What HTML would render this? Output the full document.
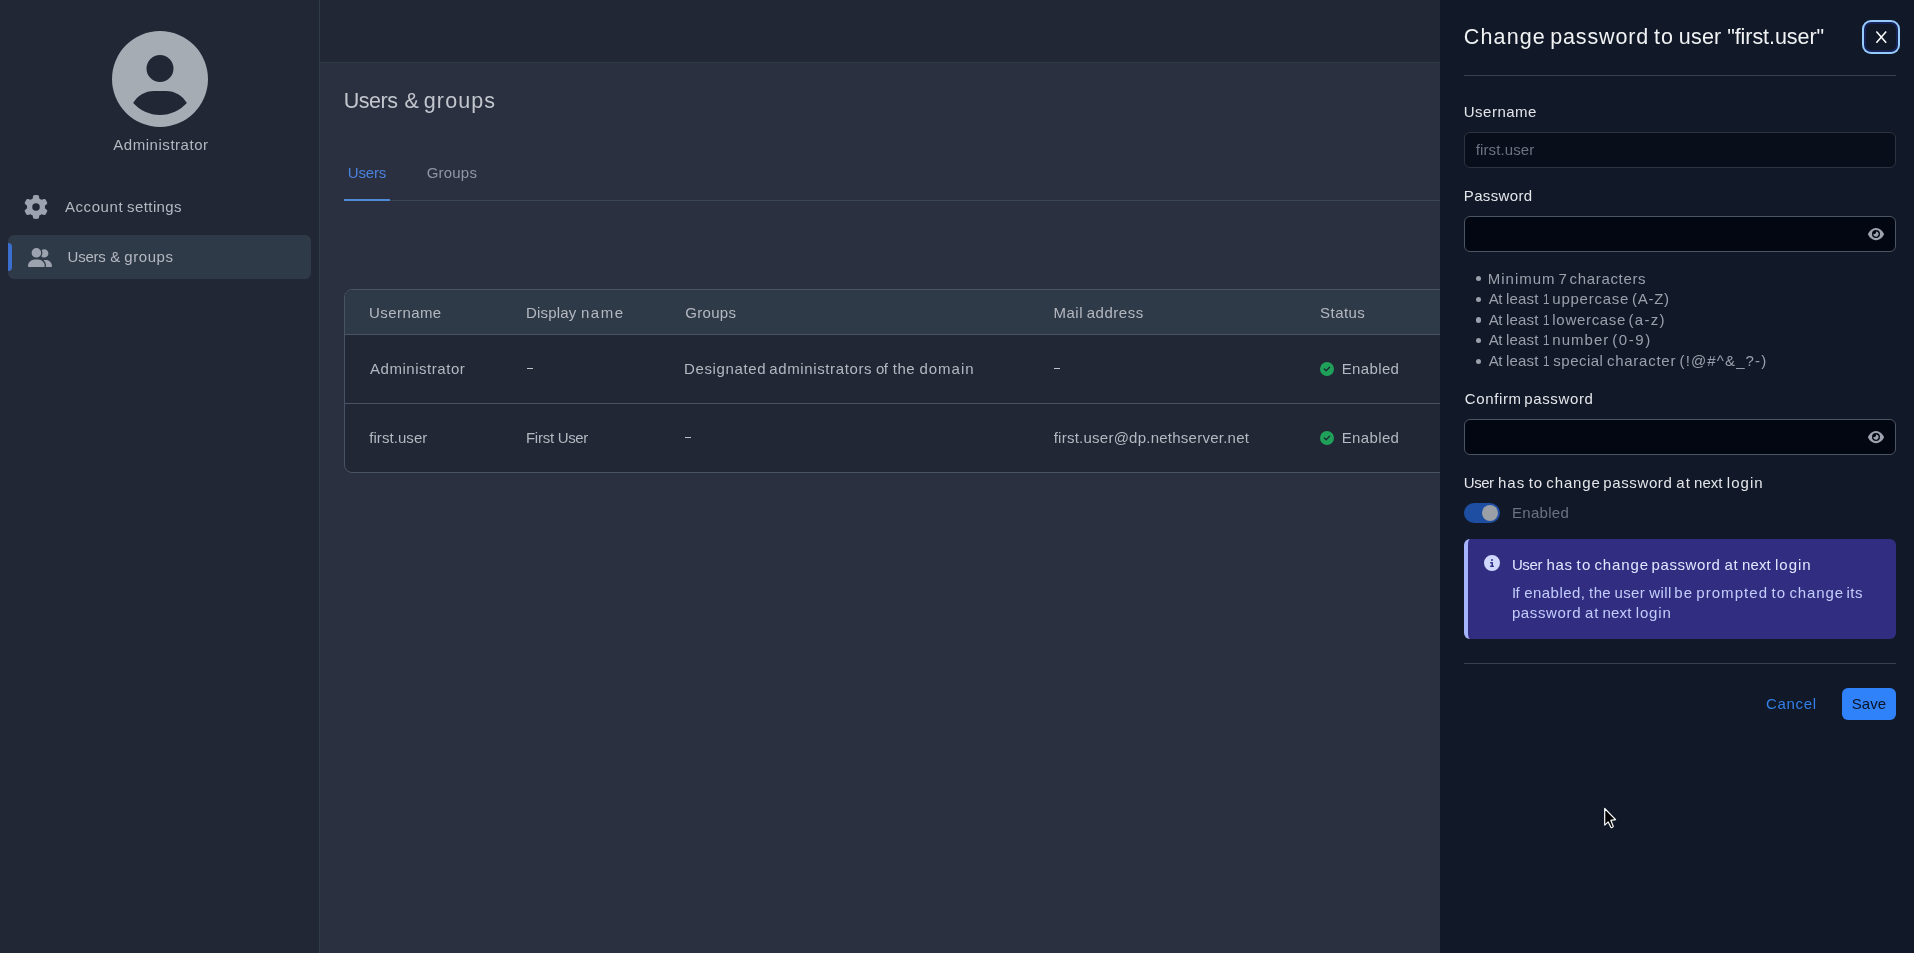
<!DOCTYPE html>
<html lang="en">
<head>
<meta charset="utf-8">
<title>Users &amp; groups</title>
<style>
*{box-sizing:border-box;margin:0;padding:0}
html,body{width:1914px;height:953px;overflow:hidden}
body{position:relative;background:#2a3040;font-family:"Liberation Sans",sans-serif;font-size:15px;}
.abs,.t,svg.ic{position:absolute}
.t{white-space:pre;line-height:20px}
#texts{left:0;top:0;width:1914px;height:953px;will-change:transform}
/* dimmed page */
#sidebar{left:0;top:0;width:320px;height:953px;background:#212735;border-right:1px solid #2f3a49}
#topbar{left:320px;top:0;width:1120px;height:63px;background:#212735;border-bottom:1px solid #2f3a49}
#navactive{left:8px;top:235px;width:303px;height:44px;border-radius:6px;background:#2f3a49}
#navbar{left:8px;top:243px;width:4px;height:28px;background:#3a6fd0;border-radius:0 4px 4px 0}
#tabline{left:344px;top:200px;width:1096px;height:1px;background:#3a4556}
#tabactive{left:344px;top:199px;width:46px;height:2px;background:#4f8ad8}
#table{left:344px;top:289px;width:1200px;height:184px;border:1px solid #485365;border-radius:8px;background:#212735;overflow:hidden}
#thead{left:0;top:0;width:100%;height:44px;background:#2f3a49}
.rowline{left:0;width:100%;height:1px;background:#485365}
/* drawer */
#drawer{left:1440px;top:0;width:474px;height:953px;background:#111827}
.hr{left:1464px;width:432px;height:1px;background:#374151}
.inp{left:1464px;width:432px;height:36px;border:1px solid #4b5563;border-radius:6px;background:#030712}
.inp.dis{background:#090e1b;border-color:#2b3443}
.dot{left:1475.7px;width:5.2px;height:5.2px;border-radius:50%;background:#9aa1ad}
#closering{left:1862px;top:20px;width:38px;height:34px;border-radius:9px;background:#95cbfd}
#closeoff{left:1864px;top:22px;width:34px;height:30px;border-radius:7px;background:#17215a}
#closebtn{left:1866px;top:24px;width:30px;height:26px;border-radius:5px;background:#111827}
#toggle{left:1464px;top:503px;width:36px;height:20px;border-radius:10px;background:#1d4ea1}
#knob{left:1482px;top:505px;width:16px;height:16px;border-radius:50%;background:#9b9fa6}
#alert{left:1464px;top:539px;width:432px;height:100px;border-radius:6px;background:#312e81;border-left:4px solid #a5b4fc}
#save{left:1842px;top:688px;width:54px;height:32px;border-radius:6px;background:#3082fb}
</style>
</head>
<body>
<!-- page (dimmed by backdrop) -->
<div class="abs" id="topbar"></div>
<div class="abs" id="sidebar"></div>

<svg class="ic" style="left:112px;top:31px" width="96" height="96" viewBox="0 0 512 512"><path fill="#a5acb4" d="M399 384.2C376.9 345.8 335.4 320 288 320H224c-47.4 0-88.9 25.8-111 64.2c35.2 39.2 86.2 63.8 143 63.8s107.8-24.7 143-63.8zM0 256a256 256 0 1 1 512 0A256 256 0 1 1 0 256zm256 16a72 72 0 1 0 0-144 72 72 0 1 0 0 144z"/></svg>

<svg class="ic" style="left:24px;top:195px" width="24" height="24" viewBox="0 0 512 512"><path fill="#9da3ae" d="M495.9 166.6c3.2 8.7 .5 18.4-6.4 24.6l-43.3 39.4c1.1 8.3 1.7 16.8 1.7 25.4s-.6 17.1-1.7 25.4l43.3 39.4c6.9 6.2 9.6 15.9 6.4 24.6c-4.400 11.900-9.700 23.300-15.800 34.300l-4.700 8.100c-6.600 11-14 21.400-22.100 31.200c-5.900 7.200-15.700 9.600-24.500 6.800l-55.700-17.700c-13.400 10.300-28.200 18.900-44 25.400l-12.500 57.100c-2 9.100-9 16.300-18.200 17.800c-13.800 2.300-28 3.500-42.500 3.500s-28.700-1.200-42.500-3.500c-9.200-1.500-16.200-8.700-18.200-17.800l-12.500-57.100c-15.800-6.500-30.600-15.100-44-25.400L83.100 425.900c-8.800 2.800-18.600 .3-24.500-6.800c-8.100-9.800-15.500-20.200-22.100-31.200l-4.700-8.100c-6.100-11-11.400-22.400-15.800-34.300c-3.200-8.700-.5-18.400 6.400-24.600l43.300-39.400C64.600 273.100 64 264.600 64 256s.6-17.100 1.700-25.400L22.400 191.200c-6.900-6.200-9.600-15.900-6.400-24.600c4.400-11.900 9.700-23.300 15.800-34.300l4.700-8.100c6.600-11 14-21.400 22.100-31.200c5.900-7.200 15.700-9.600 24.500-6.800l55.700 17.700c13.400-10.300 28.200-18.900 44-25.400l12.500-57.100c2-9.100 9-16.300 18.200-17.800C227.300 1.200 241.500 0 256 0s28.700 1.200 42.500 3.500c9.200 1.500 16.200 8.700 18.200 17.800l12.500 57.100c15.800 6.500 30.600 15.100 44 25.400l55.700-17.700c8.800-2.800 18.600-.3 24.500 6.800c8.100 9.800 15.500 20.200 22.100 31.200l4.700 8.100c6.100 11 11.400 22.400 15.800 34.300zM256 336a80 80 0 1 0 0-160 80 80 0 1 0 0 160z"/></svg>

<div class="abs" id="navactive"></div>
<div class="abs" id="navbar"></div>
<svg class="ic" style="left:28px;top:247.800px" width="24" height="19.200" viewBox="0 0 640 512"><path fill="#9da3ae" d="M96 128a128 128 0 1 1 256 0A128 128 0 1 1 96 128zM0 482.3C0 383.8 79.8 304 178.3 304h91.4C368.2 304 448 383.8 448 482.3c0 16.4-13.3 29.7-29.7 29.700H29.700C13.300 512 0 498.700 0 482.300zM609.300 512H471.400c5.400-9.400 8.600-20.300 8.600-32v-8c0-60.700-27.100-115.200-69.800-151.800c2.400-.1 4.700-.2 7.100-.2h61.400C567.800 320 640 392.200 640 481.300c0 17-13.800 30.700-30.700 30.700zM432 256c-31 0-59-12.600-79.300-32.900C372.400 196.500 384 163.600 384 128c0-26.800-6.600-52.100-18.300-74.300C384.300 40.100 407.200 32 432 32c61.900 0 112 50.100 112 112s-50.100 112-112 112z"/></svg>

<div class="abs" id="tabline"></div>
<div class="abs" id="tabactive"></div>

<div class="abs" id="table">
  <div class="abs" id="thead"></div>
  <div class="abs rowline" style="top:44px"></div>
  <div class="abs rowline" style="top:113px"></div>
</div>
<!-- dashes -->
<div class="abs" style="left:526.7px;top:367.800px;width:6.200px;height:1.200px;background:#bfc3ca"></div>
<div class="abs" style="left:1054.200px;top:367.800px;width:6.200px;height:1.200px;background:#bfc3ca"></div>
<div class="abs" style="left:684.900px;top:436.800px;width:6.200px;height:1.200px;background:#bfc3ca"></div>
<!-- status icons -->
<svg class="ic" style="left:1320px;top:362px" width="14" height="14" viewBox="0 0 512 512"><circle cx="256" cy="256" r="200" fill="#1c2a33"/><path fill="#20a15a" d="M256 512A256 256 0 1 0 256 0a256 256 0 1 0 0 512zM369 209L241 337c-9.400 9.400-24.600 9.400-33.900 0l-64-64c-9.400-9.400-9.400-24.600 0-33.900s24.600-9.400 33.900 0l47 47L335 175c9.400-9.400 24.600-9.400 33.900 0s9.400 24.600 0 33.900z"/></svg>
<svg class="ic" style="left:1320px;top:430.600px" width="14" height="14" viewBox="0 0 512 512"><circle cx="256" cy="256" r="200" fill="#1c2a33"/><path fill="#20a15a" d="M256 512A256 256 0 1 0 256 0a256 256 0 1 0 0 512zM369 209L241 337c-9.400 9.400-24.600 9.400-33.900 0l-64-64c-9.400-9.400-9.400-24.600 0-33.900s24.600-9.400 33.900 0l47 47L335 175c9.400-9.400 24.600-9.400 33.900 0s9.400 24.600 0 33.900z"/></svg>

<!-- drawer -->
<div class="abs" id="drawer"></div>
<div class="abs" id="closering"></div>
<div class="abs" id="closeoff"></div>
<div class="abs" id="closebtn"></div>
<svg class="ic" style="left:1874px;top:30px" width="14" height="14" viewBox="0 0 14 14"><path d="M2.400 1.400 L12.200 12.800 M12.200 1.400 L2.400 12.800" stroke="#ffffff" stroke-width="1.500" fill="none"/></svg>
<div class="abs hr" style="top:75px"></div>

<div class="abs inp dis" style="top:132px"></div>
<div class="abs inp" style="top:216px"></div>
<svg class="ic" style="left:1868px;top:226.600px" width="16" height="14.220" viewBox="0 0 576 512"><path fill="#9ca3af" d="M288 32c-80.800 0-145.500 36.800-192.600 80.600C48.600 156 17.300 208 2.500 243.700c-3.300 7.900-3.300 16.700 0 24.600C17.300 304 48.600 356 95.400 399.400C142.500 443.200 207.200 480 288 480s145.500-36.800 192.600-80.600c46.800-43.500 78.100-95.400 93-131.100c3.300-7.900 3.300-16.700 0-24.600c-14.900-35.700-46.200-87.700-93-131.100C433.500 68.800 368.800 32 288 32zM144 256a144 144 0 1 1 288 0 144 144 0 1 1 -288 0zm144-64c0 35.300-28.700 64-64 64c-7.100 0-13.900-1.200-20.300-3.300c-5.500-1.800-11.900 1.600-11.700 7.400c.3 6.900 1.300 13.800 3.200 20.700c13.700 51.200 66.400 81.600 117.600 67.900s81.600-66.400 67.900-117.600c-11.100-41.500-47.800-69.400-88.600-71.100c-5.800-.2-9.200 6.100-7.400 11.700c2.100 6.400 3.300 13.200 3.300 20.300z"/></svg>

<div class="abs dot" style="top:276.300px"></div>
<div class="abs dot" style="top:296.500px"></div>
<div class="abs dot" style="top:317.400px"></div>
<div class="abs dot" style="top:337.700px"></div>
<div class="abs dot" style="top:358.700px"></div>

<div class="abs inp" style="top:419px"></div>
<svg class="ic" style="left:1868px;top:429.600px" width="16" height="14.220" viewBox="0 0 576 512"><path fill="#9ca3af" d="M288 32c-80.800 0-145.500 36.800-192.600 80.600C48.600 156 17.300 208 2.500 243.700c-3.300 7.900-3.300 16.700 0 24.600C17.300 304 48.600 356 95.400 399.400C142.500 443.200 207.200 480 288 480s145.500-36.800 192.600-80.600c46.800-43.500 78.100-95.400 93-131.100c3.300-7.900 3.300-16.700 0-24.600c-14.900-35.700-46.200-87.700-93-131.100C433.500 68.800 368.800 32 288 32zM144 256a144 144 0 1 1 288 0 144 144 0 1 1 -288 0zm144-64c0 35.300-28.700 64-64 64c-7.100 0-13.900-1.200-20.300-3.300c-5.500-1.800-11.900 1.600-11.700 7.400c.3 6.900 1.300 13.800 3.200 20.700c13.700 51.200 66.400 81.600 117.600 67.900s81.600-66.400 67.900-117.600c-11.100-41.500-47.800-69.400-88.600-71.100c-5.800-.2-9.200 6.100-7.400 11.700c2.100 6.400 3.300 13.200 3.300 20.300z"/></svg>

<div class="abs" id="toggle"></div>
<div class="abs" id="knob"></div>

<div class="abs" id="alert"></div>
<svg class="ic" style="left:1484px;top:555px" width="16" height="16" viewBox="0 0 512 512"><path fill="#d0d8fd" d="M256 512A256 256 0 1 0 256 0a256 256 0 1 0 0 512zM216 336h24V272H216c-13.300 0-24-10.700-24-24s10.700-24 24-24h48c13.300 0 24 10.700 24 24v88h8c13.300 0 24 10.700 24 24s-10.700 24-24 24H216c-13.300 0-24-10.700-24-24s10.700-24 24-24zm40-208a32 32 0 1 1 0 64 32 32 0 1 1 0-64z"/></svg>

<div class="abs hr" style="top:663px"></div>
<div class="abs" id="save"></div>

<div class="abs" id="texts">
<div class="t" style="left:113.3px;top:134.97px;font-size:15px;letter-spacing:0.533px;color:#b4b8c0">Administrator</div>
<div class="t" style="left:64.9px;top:197.37px;font-size:15px;color:#b4b8c0"><span style="letter-spacing:0.584px">Account</span><span style="letter-spacing:-0.258px"> </span><span style="letter-spacing:0.4px">settings</span></div>
<div class="t" style="left:67.6px;top:246.87px;font-size:15px;color:#b4b8c0"><span style="letter-spacing:-0.274px">Users</span><span style="letter-spacing:0.631px"> </span><span style="letter-spacing:0px">&amp;</span><span style="letter-spacing:-0.183px"> </span><span style="letter-spacing:0.58px">groups</span></div>
<div class="t" style="left:343.8px;top:91.1px;font-size:21.5px;color:#c3c6cd"><span style="letter-spacing:-0.5px">Users</span><span style="letter-spacing:0.971px"> </span><span style="letter-spacing:0px">&amp;</span><span style="letter-spacing:-0.916px"> </span><span style="letter-spacing:1.1px">groups</span></div>
<div class="t" style="left:347.8px;top:163.47px;font-size:15px;letter-spacing:-0.15px;color:#4b82dc">Users</div>
<div class="t" style="left:426.7px;top:163.47px;font-size:15px;letter-spacing:0.2px;color:#8f96a3">Groups</div>
<div class="t" style="left:369.0px;top:302.67px;font-size:15px;letter-spacing:0.429px;color:#b4b8c0">Username</div>
<div class="t" style="left:525.9px;top:302.67px;font-size:15px;color:#b4b8c0"><span style="letter-spacing:0.217px">Display</span><span style="letter-spacing:0.124px"> </span><span style="letter-spacing:1.567px">name</span></div>
<div class="t" style="left:685.2px;top:302.67px;font-size:15px;letter-spacing:0.32px;color:#b4b8c0">Groups</div>
<div class="t" style="left:1053.6px;top:302.67px;font-size:15px;color:#b4b8c0"><span style="letter-spacing:0.468px">Mail</span><span style="letter-spacing:-0.454px"> </span><span style="letter-spacing:0.533px">address</span></div>
<div class="t" style="left:1320.1px;top:302.67px;font-size:15px;letter-spacing:0.44px;color:#b4b8c0">Status</div>
<div class="t" style="left:370.0px;top:359.37px;font-size:15px;letter-spacing:0.533px;color:#b4b8c0">Administrator</div>
<div class="t" style="left:684.0px;top:359.37px;font-size:15px;color:#b4b8c0"><span style="letter-spacing:0.623px">Designated</span><span style="letter-spacing:-0.984px"> </span><span style="letter-spacing:0.616px">administrators</span><span style="letter-spacing:-0.29px"> </span><span style="letter-spacing:-0.5px">of</span><span style="letter-spacing:1.017px"> </span><span style="letter-spacing:0.502px">the</span><span style="letter-spacing:0.168px"> </span><span style="letter-spacing:1.0px">domain</span></div>
<div class="t" style="left:1341.7px;top:359.37px;font-size:15px;letter-spacing:0.367px;color:#b4b8c0">Enabled</div>
<div class="t" style="left:369.2px;top:427.97px;font-size:15px;letter-spacing:0.067px;color:#b4b8c0">first.user</div>
<div class="t" style="left:525.9px;top:427.97px;font-size:15px;color:#b4b8c0"><span style="letter-spacing:-0.199px">First</span><span style="letter-spacing:-0.444px"> </span><span style="letter-spacing:-0.4px">User</span></div>
<div class="t" style="left:1053.7px;top:427.97px;font-size:15px;letter-spacing:0.244px;color:#b4b8c0">first.user@dp.nethserver.net</div>
<div class="t" style="left:1341.7px;top:427.97px;font-size:15px;letter-spacing:0.367px;color:#b4b8c0">Enabled</div>
<div class="t" style="left:1463.8px;top:27.2px;font-size:21.5px;color:#f1f2f4"><span style="letter-spacing:1.134px">Change</span><span style="letter-spacing:-1.703px"> </span><span style="letter-spacing:0.867px">password</span><span style="letter-spacing:-1.124px"> </span><span style="letter-spacing:1.069px">to</span><span style="letter-spacing:-1.248px"> </span><span style="letter-spacing:0.19px">user</span><span style="letter-spacing:-0.259px"> </span><span style="letter-spacing:-0.064px">&quot;first.user&quot;</span></div>
<div class="t" style="left:1463.8px;top:102.02px;font-size:15px;letter-spacing:0.486px;color:#e4e6ea">Username</div>
<div class="t" style="left:1475.8px;top:140.37px;font-size:15px;letter-spacing:0.111px;color:#6b7280">first.user</div>
<div class="t" style="left:1463.8px;top:186.22px;font-size:15px;letter-spacing:0.343px;color:#e4e6ea">Password</div>
<div class="t" style="left:1487.8px;top:269.07px;font-size:15px;color:#9aa1ad"><span style="letter-spacing:0.984px">Minimum</span><span style="letter-spacing:-1.298px"> </span><span style="letter-spacing:0px">7</span><span style="letter-spacing:-1.311px"> </span><span style="letter-spacing:0.656px">characters</span></div>
<div class="t" style="left:1488.8px;top:289.27px;font-size:15px;color:#9aa1ad"><span style="letter-spacing:-0.5px">At</span><span style="letter-spacing:-0.254px"> </span><span style="letter-spacing:0.226px">least</span><span style="letter-spacing:-0.384px"> </span><span style="display:inline-block;transform:scaleX(0.78);transform-origin:0 50%">1</span><span style="letter-spacing:-2.711px"> </span><span style="letter-spacing:0.75px">uppercase</span><span style="letter-spacing:-1.284px"> </span><span style="letter-spacing:0.725px">(A-Z)</span></div>
<div class="t" style="left:1488.8px;top:310.17px;font-size:15px;color:#9aa1ad"><span style="letter-spacing:-0.5px">At</span><span style="letter-spacing:-0.254px"> </span><span style="letter-spacing:0.226px">least</span><span style="letter-spacing:-0.384px"> </span><span style="display:inline-block;transform:scaleX(0.78);transform-origin:0 50%">1</span><span style="letter-spacing:-2.711px"> </span><span style="letter-spacing:0.688px">lowercase</span><span style="letter-spacing:-1.69px"> </span><span style="letter-spacing:1.275px">(a-z)</span></div>
<div class="t" style="left:1488.8px;top:330.47px;font-size:15px;color:#9aa1ad"><span style="letter-spacing:-0.5px">At</span><span style="letter-spacing:-0.254px"> </span><span style="letter-spacing:0.226px">least</span><span style="letter-spacing:-0.384px"> </span><span style="display:inline-block;transform:scaleX(0.78);transform-origin:0 50%">1</span><span style="letter-spacing:-2.711px"> </span><span style="letter-spacing:1.021px">number</span><span style="letter-spacing:-1.351px"> </span><span style="letter-spacing:1.575px">(0-9)</span></div>
<div class="t" style="left:1488.8px;top:351.47px;font-size:15px;color:#9aa1ad"><span style="letter-spacing:-0.5px">At</span><span style="letter-spacing:-0.254px"> </span><span style="letter-spacing:0.226px">least</span><span style="letter-spacing:-0.384px"> </span><span style="display:inline-block;transform:scaleX(0.78);transform-origin:0 50%">1</span><span style="letter-spacing:-1.711px"> </span><span style="letter-spacing:0.484px">special</span><span style="letter-spacing:-0.658px"> </span><span style="letter-spacing:0.738px">character</span><span style="letter-spacing:-0.74px"> </span><span style="letter-spacing:1.133px">(!@#^&amp;_?-)</span></div>
<div class="t" style="left:1464.8px;top:389.37px;font-size:15px;color:#e4e6ea"><span style="letter-spacing:0.617px">Confirm</span><span style="letter-spacing:-1.604px"> </span><span style="letter-spacing:0.643px">password</span></div>
<div class="t" style="left:1463.8px;top:473.27px;font-size:15px;color:#e4e6ea"><span style="letter-spacing:-0.5px">User</span><span style="letter-spacing:0.261px"> </span><span style="letter-spacing:1.102px">has</span><span style="letter-spacing:-0.76px"> </span><span style="letter-spacing:0.804px">to</span><span style="letter-spacing:-0.79px"> </span><span style="letter-spacing:0.861px">change</span><span style="letter-spacing:-1.55px"> </span><span style="letter-spacing:0.601px">password</span><span style="letter-spacing:-0.274px"> </span><span style="letter-spacing:1.004px">at</span><span style="letter-spacing:-0.99px"> </span><span style="letter-spacing:0.035px">next</span><span style="letter-spacing:0.135px"> </span><span style="letter-spacing:1.025px">login</span></div>
<div class="t" style="left:1512.1px;top:503.17px;font-size:15px;letter-spacing:0.267px;color:#6b7280">Enabled</div>
<div class="t" style="left:1511.9px;top:555.47px;font-size:15px;color:#e0e7ff"><span style="letter-spacing:-0.365px">User</span><span style="letter-spacing:0.223px"> </span><span style="letter-spacing:0.702px">has</span><span style="letter-spacing:-0.36px"> </span><span style="letter-spacing:1.104px">to</span><span style="letter-spacing:-1.09px"> </span><span style="letter-spacing:0.881px">change</span><span style="letter-spacing:-1.57px"> </span><span style="letter-spacing:0.601px">password</span><span style="letter-spacing:-0.274px"> </span><span style="letter-spacing:0.804px">at</span><span style="letter-spacing:-0.79px"> </span><span style="letter-spacing:0.135px">next</span><span style="letter-spacing:0.035px"> </span><span style="letter-spacing:0.95px">login</span></div>
<div class="t" style="left:1511.9px;top:583.17px;font-size:15px;color:#c3cdfb"><span style="letter-spacing:-0.5px">If</span><span style="letter-spacing:0.789px"> </span><span style="letter-spacing:0.458px">enabled,</span><span style="letter-spacing:-0.491px"> </span><span style="letter-spacing:0.352px">the</span><span style="letter-spacing:-0.682px"> </span><span style="letter-spacing:0.335px">user</span><span style="letter-spacing:0.007px"> </span><span style="letter-spacing:0.401px">will</span><span style="letter-spacing:-1.716px"> </span><span style="letter-spacing:1.3px">be</span><span style="letter-spacing:-1.354px"> </span><span style="letter-spacing:1.058px">prompted</span><span style="letter-spacing:-0.903px"> </span><span style="letter-spacing:1.3px">to</span><span style="letter-spacing:-1.283px"> </span><span style="letter-spacing:0.881px">change</span><span style="letter-spacing:-1.57px"> </span><span style="letter-spacing:0.45px">its</span></div>
<div class="t" style="left:1511.9px;top:603.17px;font-size:15px;color:#c3cdfb"><span style="letter-spacing:0.629px">password</span><span style="letter-spacing:-0.303px"> </span><span style="letter-spacing:0.804px">at</span><span style="letter-spacing:-0.79px"> </span><span style="letter-spacing:0.168px">next</span><span style="letter-spacing:0.002px"> </span><span style="letter-spacing:0.85px">login</span></div>
<div class="t" style="left:1766.1px;top:694.12px;font-size:15px;letter-spacing:0.64px;color:#3380ea">Cancel</div>
<div class="t" style="left:1851.7px;top:694.12px;font-size:15px;letter-spacing:0.067px;color:#0b1220">Save</div>
</div>

<!-- mouse cursor -->
<svg class="ic" style="left:1602px;top:806px" width="18" height="26" viewBox="0 0 18 26"><path d="M2.700 2.500 L2.700 19.100 L6.200 15.900 L8.900 21.200 Q10.100 22.200 11.300 20.500 L8.800 14.300 L13.600 13.600 Z" fill="#000000" stroke="#ffffff" stroke-width="1.200" stroke-linejoin="round"/></svg>
</body>
</html>
